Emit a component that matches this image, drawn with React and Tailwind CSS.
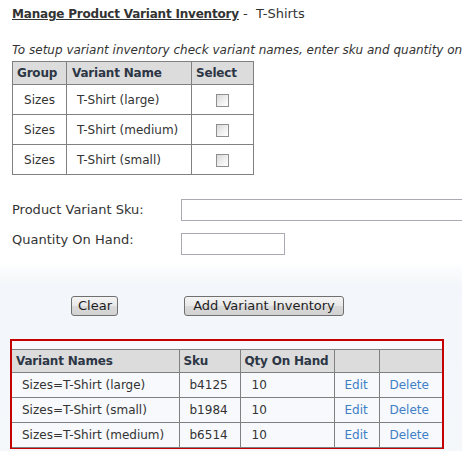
import React from "react";

const F = { fontFamily: '"DejaVu Sans", Verdana, sans-serif' };

function Btn({ children, className = "" }) {
  return (
    <button
      className={
        "h-[20px] px-[6px] text-[13px] leading-[16px] text-[#1e1e1e] whitespace-nowrap border border-[#707070] rounded-[3px] bg-[linear-gradient(to_bottom,#f4f4f4_0%,#e8e8e8_50%,#dadada_51%,#d2d2d2_100%)] " +
        className
      }
      style={F}
    >
      {children}
    </button>
  );
}

export default function App() {
  const top = [
    ["Sizes", "T-Shirt (large)"],
    ["Sizes", "T-Shirt (medium)"],
    ["Sizes", "T-Shirt (small)"],
  ];
  const bottom = [
    ["Sizes=T-Shirt (large)", "b4125", "10"],
    ["Sizes=T-Shirt (small)", "b1984", "10"],
    ["Sizes=T-Shirt (medium)", "b6514", "10"],
  ];
  return (
    <div
      className="w-[462px] h-[451px] overflow-hidden text-[13px] text-[#333] bg-[linear-gradient(to_bottom,#ffffff_0px,#ffffff_262px,#f3f6fa_285px,#f5f8fb_451px)]"
      style={F}
    >
      <div className="pl-[12px] pt-[6px] whitespace-nowrap leading-[16px] text-[12px]">
        <span className="font-bold underline text-[#333] tracking-[-0.2px]">Manage Product Variant Inventory</span>
        <span className="text-[13px]"> -&nbsp; T-Shirts</span>
      </div>
      <div className="pl-[12px] mt-[20px] whitespace-nowrap italic leading-[16px] text-[12px]">
        To setup variant inventory check variant names, enter sku and quantity on hand then click Add
      </div>
      <div className="pl-[12px] mt-[3px]">
        <table className="border-collapse border border-[#808080] text-[12px]">
          <thead>
            <tr className="h-[23px] bg-[#dcdcdc] text-[#2c3645]">
              <th className="w-[54px] border border-[#808080] text-left pl-[4px] font-bold tracking-[-0.2px]">Group</th>
              <th className="w-[125px] border border-[#808080] text-left pl-[5px] font-bold tracking-[-0.2px]">Variant Name</th>
              <th className="w-[62px] border border-[#808080] text-left pl-[4px] font-bold tracking-[-0.2px]">Select</th>
            </tr>
          </thead>
          <tbody>
            {top.map((r, i) => (
              <tr key={i} className="h-[30px] bg-white">
                <td className="border border-[#808080] text-center">{r[0]}</td>
                <td className="border border-[#808080] pl-[10px] whitespace-nowrap">{r[1]}</td>
                <td className="border border-[#808080] text-center">
                  <span className="inline-block align-middle w-[13px] h-[13px] border border-[#8f8f8f] bg-[linear-gradient(135deg,#d8d8d8_0%,#f2f2f2_60%,#ffffff_100%)]" />
                </td>
              </tr>
            ))}
          </tbody>
        </table>
      </div>
      <div className="flex mt-[24px] pl-[12px] whitespace-nowrap">
        <div className="w-[169px] shrink-0 pt-[3px] leading-[16px]">Product Variant Sku:</div>
        <div className="w-[320px] h-[22px] shrink-0 border border-[#aaaab2] bg-white" />
      </div>
      <div className="flex mt-[12px] pl-[12px] whitespace-nowrap">
        <div className="w-[169px] shrink-0 -mt-[1px] leading-[16px]">Quantity On Hand:</div>
        <div className="w-[104px] h-[22px] shrink-0 border border-[#aaaab2] bg-white" />
      </div>
      <div className="flex mt-[41px] pl-[71px]">
        <Btn className="w-[47px]">Clear</Btn>
        <Btn className="ml-[66px] w-[160px]">Add Variant Inventory</Btn>
      </div>
      <div className="ml-[10px] mt-[23px] w-[434px] h-[110px] border-2 border-[#c40000] pt-[8px] bg-[#f7f9fc]">
        <table className="border-collapse w-[430px] text-[12px] table-fixed">
          <thead>
            <tr className="h-[23px] bg-[#dcdcdc] text-[#2c3645]">
              <th className="w-[167px] border border-[#808080] border-l-0 text-left pl-[4px] font-bold tracking-[-0.2px] whitespace-nowrap">Variant Names</th>
              <th className="w-[61px] border border-[#808080] text-left pl-[4px] font-bold tracking-[-0.2px]">Sku</th>
              <th className="w-[94px] border border-[#808080] text-left pl-[4px] font-bold tracking-[-0.2px] whitespace-nowrap">Qty On Hand</th>
              <th className="w-[45px] border border-[#808080]"></th>
              <th className="border border-[#808080] border-r-0"></th>
            </tr>
          </thead>
          <tbody>
            {bottom.map((r, i) => (
              <tr key={i} className="h-[25px]">
                <td className="border border-[#808080] border-l-0 pl-[10px] whitespace-nowrap">{r[0]}</td>
                <td className="border border-[#808080] pl-[10px]">{r[1]}</td>
                <td className="border border-[#808080] pl-[11px]">{r[2]}</td>
                <td className="border border-[#808080] pl-[10px] text-[#3f7fc6]">Edit</td>
                <td className="border border-[#808080] border-r-0 pl-[10px] text-[#3f7fc6]">Delete</td>
              </tr>
            ))}
          </tbody>
        </table>
      </div>
    </div>
  );
}
